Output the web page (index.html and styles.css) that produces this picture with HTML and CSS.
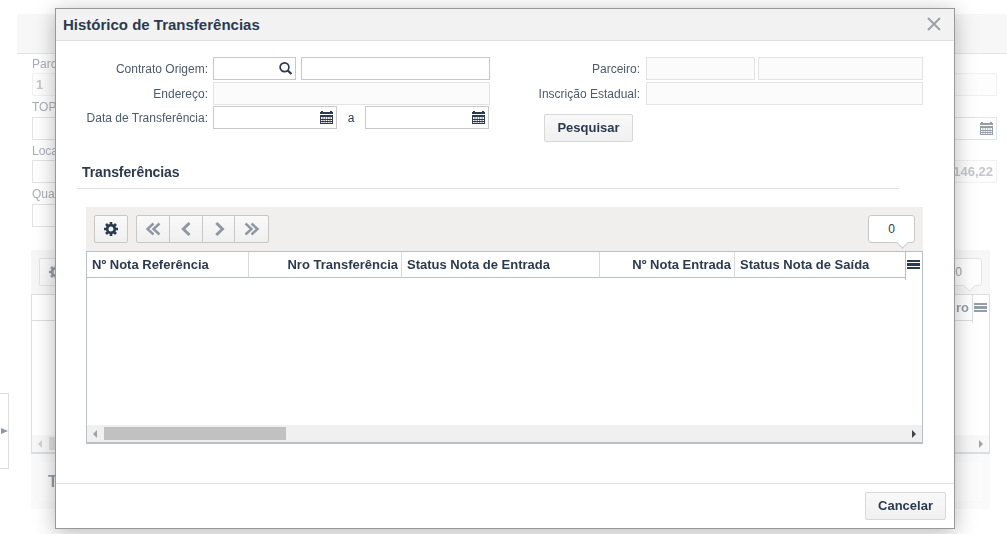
FILE: index.html
```html
<!DOCTYPE html>
<html lang="pt-BR">
<head>
    <meta charset="UTF-8">
    <meta name="viewport" content="width=device-width, initial-scale=1.0">
    <title>Histórico de Transferências</title>
    <link rel="stylesheet" href="styles.css">
</head>
<body>

    <svg class="symbols" width="0" height="0">
        <symbol id="gear" viewBox="0 0 14 14">
            <path fill="currentColor" fill-rule="evenodd" d="M5.700 0h2.600v2l1.300.5L11 1.100 12.900 3 11.500 4.400l.5 1.300h2v2.600h-2l-.5 1.300L12.900 11 11 12.900 9.600 11.500l-1.300.5v2H5.700v-2l-1.300-.5L3 12.900 1.100 11l1.400-1.400L2 8.300H0V5.700h2l.5-1.300L1.100 3 3 1.100l1.400 1.400L5.700 2zM7 4.500a2.500 2.500 0 1 0 0 5 2.500 2.500 0 0 0 0-5z"/>
        </symbol>
        <symbol id="calendar" viewBox="0 0 13 13">
            <path fill="currentColor" d="M0 1h1V0h2v1h7V0h2v1h1v2H0zM0 4h13v2H0z"/>
            <path fill="none" stroke="currentColor" d="M.5 6v7M12.500 6v7M0 8.500h13M0 10.500h13M0 12.500h13"/>
            <path fill="none" stroke="currentColor" stroke-width=".7" d="M2.900 6v6M5.300 6v6M7.700 6v6M10.100 6v6"/>
        </symbol>
        <symbol id="search" viewBox="0 0 13 13">
            <circle cx="5.500" cy="5.300" r="4.400" fill="none" stroke="currentColor" stroke-width="1.700"/>
            <path d="M8.500 8.300l3.900 3.700" stroke="currentColor" stroke-width="2.200"/>
        </symbol>
        <symbol id="prev" viewBox="0 0 16 14">
            <path d="M11.500 1L5.300 7l6.200 6" fill="none" stroke="currentColor" stroke-width="2.900"/>
        </symbol>
        <symbol id="next" viewBox="0 0 16 14">
            <path d="M5.300 1L11.500 7l-6.200 6" fill="none" stroke="currentColor" stroke-width="2.900"/>
        </symbol>
        <symbol id="first" viewBox="0 0 16 14">
            <path d="M8.500 1.500L2.500 7l6 5.500M14.500 1.500L8.500 7l6 5.500" fill="none" stroke="currentColor" stroke-width="2.400"/>
        </symbol>
        <symbol id="last" viewBox="0 0 16 14">
            <path d="M7.500 1.500L13.500 7l-6 5.500M1.500 1.500L7.500 7l-6 5.500" fill="none" stroke="currentColor" stroke-width="2.400"/>
        </symbol>
    </svg>

    <div class="page">
        <div class="page-bar"></div>
        <div class="page-form">
            <label>Parceiro:</label>
            <div class="field readonly filled">1</div>
            <label>TOP:</label>
            <div class="field"><svg class="calendar"><use href="#calendar"/></svg></div>
            <label>Local:</label>
            <div class="pair">
                <div class="field"></div>
                <div class="field readonly filled total">146,22</div>
            </div>
            <label>Quantidade:</label>
            <div class="field short"></div>
        </div>
        <div class="grid page-grid">
            <div class="toolbar">
                <button class="tool"><svg class="gear"><use href="#gear"/></svg></button>
                <div class="count">0</div>
            </div>
            <div class="table">
                <div class="table-head">
                    <div class="col fill right">Parceiro</div>
                    <div class="menu"><i></i></div>
                </div>
                <div class="table-body"></div>
                <div class="scrollbar"><span class="arrow left"></span><span class="thumb"></span><span class="arrow"></span></div>
            </div>
        </div>
        <div class="page-total"><div class="page-total-inner">Total</div></div>
    </div>
    <div class="side-tab"><span></span></div>

    <div class="modal">
        <div class="modal-header">
            <h1>Histórico de Transferências</h1>
            <svg class="close" viewBox="0 0 14 14"><path d="M1 1l12 12M13 1L1 13" stroke="currentColor" stroke-width="2"/></svg>
        </div>

        <div class="modal-body">
            <div class="filters">
                <div class="filter-col">
                    <div class="row">
                        <label>Contrato Origem:</label>
                        <div class="field code"><svg class="search"><use href="#search"/></svg></div>
                        <div class="field fill"></div>
                    </div>
                    <div class="row">
                        <label>Endereço:</label>
                        <div class="field readonly fill"></div>
                    </div>
                    <div class="row dates">
                        <label>Data de Transferência:</label>
                        <div class="field date"><svg class="calendar"><use href="#calendar"/></svg></div>
                        <span class="until">a</span>
                        <div class="field date"><svg class="calendar"><use href="#calendar"/></svg></div>
                    </div>
                </div>
                <div class="filter-col second">
                    <div class="row">
                        <label>Parceiro:</label>
                        <div class="field readonly partner"></div>
                        <div class="field readonly fill"></div>
                    </div>
                    <div class="row">
                        <label>Inscrição Estadual:</label>
                        <div class="field readonly fill"></div>
                    </div>
                    <button class="btn search-btn">Pesquisar</button>
                </div>
            </div>

            <h2>Transferências</h2>

            <div class="grid">
                <div class="toolbar">
                    <button class="tool"><svg class="gear"><use href="#gear"/></svg></button>
                    <div class="pager">
                        <button><svg><use href="#first"/></svg></button>
                        <button><svg><use href="#prev"/></svg></button>
                        <button><svg><use href="#next"/></svg></button>
                        <button><svg><use href="#last"/></svg></button>
                    </div>
                    <div class="count">0</div>
                </div>
                <div class="table">
                    <div class="table-head">
                        <div class="col ref">Nº Nota Referência</div>
                        <div class="col transf right">Nro Transferência</div>
                        <div class="col in-status">Status Nota de Entrada</div>
                        <div class="col in-note right">Nº Nota Entrada</div>
                        <div class="col fill">Status Nota de Saída</div>
                        <div class="menu"><i></i></div>
                    </div>
                    <div class="table-body"></div>
                    <div class="scrollbar"><span class="arrow left"></span><span class="thumb"></span><span class="arrow"></span></div>
                </div>
            </div>
        </div>

        <div class="modal-footer">
            <button class="btn">Cancelar</button>
        </div>
    </div>

</body>
</html>
```

FILE: styles.css
```css
* {
    box-sizing: border-box;
}

body {
    position: relative;
    width: 1007px;
    height: 534px;
    margin: 0;
    overflow: hidden;
    background: #fff;
    color: #2b3a4e;
    font-family: "Liberation Sans", Arial, sans-serif;
    font-size: 12px;
}

svg {
    display: block;
}

.symbols {
    position: absolute;
}

button {
    margin: 0;
    padding: 0;
    font-family: inherit;
    color: inherit;
}

label {
    color: #4d5a69;
}

/* Fields */
.field {
    display: flex;
    align-items: center;
    justify-content: flex-end;
    height: 23px;
    padding-right: 3px;
    border: 1px solid #c8c8c8;
    background: #fff;
}

.field.readonly {
    border-color: #e3e3e3;
    background: #fbfbfb;
}

.fill {
    flex: 1;
}

.calendar {
    width: 13px;
    height: 13px;
}

.search {
    width: 13px;
    height: 13px;
}

/* Page behind the dialog */
.page {
    padding: 14px 0 0 17px;
    opacity: 0.5;
}

.page-bar {
    height: 40px;
    border-bottom: 1px solid #c8c8c8;
    background: #eee;
}

.page-form {
    display: grid;
    grid-template-rows: 19px 23px 21px 23px 20px 23px 21px 23px;
    margin: 0 10px 0 15px;
}

.page-form label {
    line-height: 22px;
}

.page-form label:first-child {
    line-height: 20px;
}

.filled {
    justify-content: flex-start;
    padding-left: 3px;
    color: #888d96;
    font-size: 13px;
    font-weight: bold;
}

.pair {
    display: flex;
    gap: 5px;
}

.pair .field {
    flex: 1;
}

.pair .total {
    justify-content: flex-end;
}

.short {
    width: 300px;
}

.page-grid.grid {
    width: 959px;
    margin: 23px 0 0 14px;
}

.page-grid .table {
    height: 160px;
}

.page-total {
    width: 959px;
    height: 55px;
    margin-left: 14px;
    padding: 8px;
    background: #f5f5f5;
}

.page-total-inner {
    height: 39px;
    padding-left: 9px;
    background: #f8f8f8;
    font-size: 16px;
    font-weight: bold;
    line-height: 39px;
}

.side-tab {
    position: absolute;
    top: 393px;
    left: 0;
    display: flex;
    align-items: center;
    width: 9px;
    height: 76px;
    padding-left: 1px;
    border: 1px solid #dedede;
    border-left: 0;
    background: #fff;
}

.side-tab span {
    border: 3px solid transparent;
    border-left: 7px solid #8d97a6;
    border-right: 0;
}

/* Dialog */
.modal {
    position: absolute;
    top: 8px;
    left: 55px;
    display: flex;
    flex-direction: column;
    width: 900px;
    height: 521px;
    border: 1px solid #989898;
    background: #fff;
    box-shadow: 0 4px 20px rgba(0, 0, 0, 0.28);
}

.modal-header {
    display: flex;
    align-items: center;
    justify-content: space-between;
    height: 32px;
    padding: 0 13px 0 7px;
    border-bottom: 1px solid #e0e0e0;
    background: #f2f2f2;
}

h1 {
    margin: 0;
    font-size: 15px;
    line-height: 30px;
}

.close {
    width: 14px;
    height: 14px;
    margin-bottom: 2px;
    color: #9ba1aa;
}

.modal-body {
    flex: 1;
    padding-top: 16px;
}

.filters {
    display: flex;
    height: 101px;
}

.filter-col {
    width: 434px;
}

.filter-col.second {
    width: 433px;
}

.row {
    display: flex;
    align-items: center;
    gap: 5px;
    margin-bottom: 2px;
}

.row label {
    width: 152px;
    text-align: right;
}

.second .row {
    gap: 3px;
}

.second .row label {
    width: 150px;
    margin-right: 3px;
}

.row.dates {
    gap: 0;
    margin-top: -1px;
}

.row.dates label {
    margin-right: 5px;
}

.code {
    width: 83px;
}

.date {
    width: 124px;
}

.until {
    width: 28px;
    text-align: center;
}

.partner {
    width: 109px;
}

.btn {
    height: 28px;
    padding-bottom: 1px;
    border: 1px solid #d8d8d8;
    border-radius: 2px;
    background: linear-gradient(#f9f9f9, #f0f0f0);
    font-size: 13px;
    font-weight: bold;
}

.search-btn {
    width: 89px;
    margin: 7px 0 0 54px;
}

h2 {
    width: 822px;
    height: 31px;
    margin: 0 0 18px 21px;
    padding-left: 5px;
    border-bottom: 1px solid #e0e0e0;
    font-size: 14px;
    letter-spacing: -0.1px;
    line-height: 29px;
}

/* Grid */
.grid {
    width: 837px;
    margin-left: 30px;
}

.toolbar {
    display: flex;
    height: 44px;
    padding: 8px;
    background: #f0efee;
}

.tool {
    display: flex;
    align-items: center;
    justify-content: center;
    width: 34px;
    height: 28px;
    border: 1px solid #c8c8c8;
    border-radius: 2px;
    background: linear-gradient(#f9f9f9, #f0f0f0);
}

.gear {
    width: 14px;
    height: 14px;
}

.pager {
    display: flex;
    width: 133px;
    margin-left: 8px;
    border: 1px solid #c8c8c8;
    border-radius: 2px;
    background: linear-gradient(#f9f9f9, #f0f0f0);
}

.pager button {
    display: flex;
    align-items: center;
    justify-content: center;
    width: 33px;
    padding-left: 1px;
    border: 0;
    border-right: 1px solid #c8c8c8;
    background: none;
    color: #9097a3;
}

.pager button:last-child {
    border-right: 0;
}

.pager svg {
    width: 16px;
    height: 14px;
}

.count {
    position: relative;
    width: 47px;
    height: 28px;
    margin-left: auto;
    border: 1px solid #c8c8c8;
    border-radius: 3px;
    background: #fff;
    line-height: 27px;
    text-align: center;
}

.count::after {
    content: "";
    position: absolute;
    right: 7px;
    bottom: -5px;
    width: 8px;
    height: 8px;
    border: 1px solid #c8c8c8;
    border-top: 0;
    border-left: 0;
    background: #fff;
    transform: rotate(45deg);
}

.table {
    display: flex;
    flex-direction: column;
    height: 193px;
    border: 1px solid #b9bfc4;
    border-bottom-width: 2px;
    background: #fff;
}

.table-head {
    display: flex;
    height: 26px;
}

.col {
    padding: 0 3px 0 5px;
    border-right: 1px solid #d8dadd;
    border-bottom: 1px solid #b9bfc4;
    font-size: 13px;
    font-weight: bold;
    line-height: 25px;
    white-space: nowrap;
}

.col.fill {
    border-right: 0;
}

.right {
    text-align: right;
}

.ref {
    width: 162px;
}

.transf {
    width: 153px;
}

.in-status {
    width: 198px;
}

.in-note {
    width: 135px;
}

.menu {
    width: 17px;
    height: 28px;
    padding: 8px 0 0 1px;
    border-left: 1px solid #b9bfc4;
}

.menu i {
    display: block;
    width: 13px;
    height: 9px;
    border-top: 2px solid #2b3a4e;
    border-bottom: 2px solid #2b3a4e;
    background: linear-gradient(transparent 1px, #2b3a4e 1px, #2b3a4e 4px, transparent 4px);
}

.table-body {
    flex: 1;
}

.scrollbar {
    display: flex;
    align-items: center;
    height: 17px;
    padding: 0 6px;
    background: #f0f0f0;
}

.thumb {
    width: 182px;
    height: 13px;
    margin-left: 7px;
    background: #c1c1c1;
}

.arrow {
    margin-left: auto;
    border: 4px solid transparent;
    border-left-color: #444;
    border-right: 0;
}

.arrow.left {
    margin-left: 0;
    border: 4px solid transparent;
    border-right-color: #a3a3a3;
    border-left: 0;
}

.modal-footer {
    display: flex;
    justify-content: flex-end;
    height: 45px;
    padding: 8px 8px 0 0;
    border-top: 1px solid #e0e0e0;
}

.modal-footer .btn {
    width: 81px;
}
```
